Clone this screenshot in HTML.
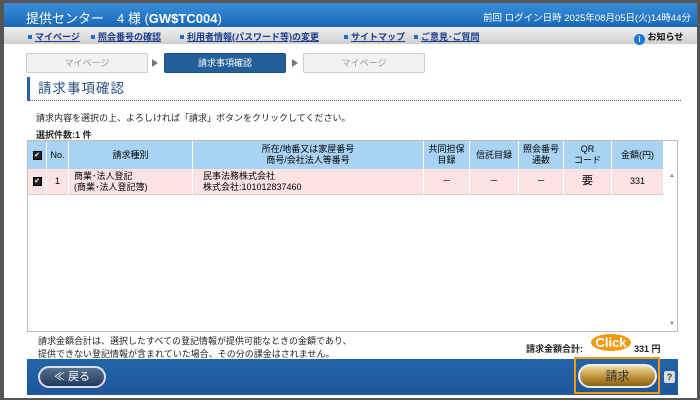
<!DOCTYPE html>
<html><head><meta charset="utf-8"><style>
*{margin:0;padding:0;box-sizing:border-box}
body{width:700px;height:400px;overflow:hidden;background:#555;font-family:"Liberation Sans","Noto Sans CJK JP",sans-serif;position:relative}
.frame{position:absolute;left:4px;top:3px;width:693px;height:395px;background:#fff;overflow:hidden}
.hdr{position:absolute;left:0;top:0;width:100%;height:24px;background:linear-gradient(#3a8fd8,#1a68b8);color:#fff}
.hdr .t{position:absolute;left:22px;top:5px;font-size:13px}
.hdr .r{position:absolute;right:6px;top:7px;font-size:9.5px}
.nav{position:absolute;left:0;top:24px;width:100%;height:17px;background:linear-gradient(#f0f0f0,#cfcfcf);font-size:9px;font-weight:bold}
.nav span{position:absolute;top:3px;color:#1a3c8c;text-decoration:underline}
.nav i{display:inline-block;width:4px;height:4px;background:#1e6fc8;margin-right:3px;vertical-align:1px}
.step{position:absolute;top:50px;height:20px;border:1px solid #ccc;background:#f2f2f2;color:#999;font-size:9px;text-align:center;line-height:18px;border-radius:2px}
.arr{position:absolute;top:56px;width:0;height:0;border-left:6px solid #777;border-top:4px solid transparent;border-bottom:4px solid transparent}
.h1{position:absolute;left:23px;top:74px;height:24px;border-left:3px solid #2862a8;padding-left:8px;font-size:13.5px;color:#2a4f7a;letter-spacing:1px;line-height:24px}
.dot{position:absolute;left:23px;top:97px;width:654px;border-top:1px dotted #557}
.txt{position:absolute;font-size:9px;color:#222}
.tbl{position:absolute;left:23px;top:137px;width:651px;height:192px;border:1px solid #bbb}
.c{position:absolute;font-size:9px;text-align:center;display:flex;align-items:center;justify-content:center;line-height:11px}
.hd{top:0;height:28px;background:#a9d3f2;border-right:1px solid #fff}
.rw{top:28px;height:26px;background:#fce3e3;border-right:1px solid #fff;border-bottom:1px solid #dcc}
.cb{width:9px;height:9px;background:#222;border:1px solid #000;color:#fff;font-size:7px;line-height:7px;text-align:center}
.foot{position:absolute;left:23px;top:356px;width:651px;height:36px;background:linear-gradient(#2364a8,#1d5799)}
</style></head><body>
<div class="frame">
<div class="hdr"><div class="t">提供センター　4 様 (<b>GW$TC004</b>)</div><div class="r">前回 ログイン日時 2025年08月05日(火)14時44分</div></div>
<div class="nav">
<span style="left:24px"><i></i>マイページ</span>
<span style="left:87px"><i></i>照会番号の確認</span>
<span style="left:176px"><i></i>利用者情報(パスワード等)の変更</span>
<span style="left:340px"><i></i>サイトマップ</span>
<span style="left:410px"><i></i>ご意見･ご質問</span>
<span style="left:630px;color:#111;text-decoration:none"><b style="display:inline-block;width:11px;height:11px;border-radius:50%;background:#1e78d0;color:#fff;font-size:8px;text-align:center;line-height:11px;vertical-align:-2px">i</b> お知らせ</span>
</div>
<div class="step" style="left:22px;width:122px">マイページ</div>
<div class="arr" style="left:148px"></div>
<div class="step" style="left:160px;width:122px;background:#235f98;color:#fff;border-color:#1d4f80">請求事項確認</div>
<div class="arr" style="left:288px"></div>
<div class="step" style="left:299px;width:122px">マイページ</div>
<div class="h1">請求事項確認</div>
<div class="dot"></div>
<div class="txt" style="left:32px;top:108px">請求内容を選択の上、よろしければ「請求」ボタンをクリックしてください。</div>
<div class="txt" style="left:32px;top:125px;font-weight:bold">選択件数:1 件</div>
<div class="tbl">
<div class="c hd" style="left:0;width:19px"><div class="cb">✔</div></div>
<div class="c hd" style="left:19px;width:22px">No.</div>
<div class="c hd" style="left:41px;width:124px">請求種別</div>
<div class="c hd" style="left:165px;width:231px">所在/地番又は家屋番号<br>商号/会社法人等番号</div>
<div class="c hd" style="left:396px;width:46px">共同担保<br>目録</div>
<div class="c hd" style="left:442px;width:49px">信託目録</div>
<div class="c hd" style="left:491px;width:45px">照会番号<br>通数</div>
<div class="c hd" style="left:536px;width:48px">QR<br>コード</div>
<div class="c hd" style="left:584px;width:52px">金額(円)</div>
<div class="c hd" style="left:636px;width:13px;border:none;background:#fff"></div>
<div class="c rw" style="left:0;width:19px"><div class="cb">✔</div></div>
<div class="c rw" style="left:19px;width:22px">1</div>
<div class="c rw" style="left:41px;width:124px;justify-content:flex-start;padding-left:5px;text-align:left">商業･法人登記<br>(商業･法人登記簿)</div>
<div class="c rw" style="left:165px;width:231px;justify-content:flex-start;padding-left:10px;text-align:left">民事法務株式会社<br>株式会社:101012837460</div>
<div class="c rw" style="left:396px;width:46px">－</div>
<div class="c rw" style="left:442px;width:49px">－</div>
<div class="c rw" style="left:491px;width:45px">－</div>
<div class="c rw" style="left:536px;width:48px;font-size:11px">要</div>
<div class="c rw" style="left:584px;width:52px">331</div>
<div style="position:absolute;left:641px;top:32px;font-size:6px;color:#888">▲</div>
<div style="position:absolute;left:641px;top:180px;font-size:6px;color:#888">▼</div>
</div>
<div class="txt" style="left:34px;top:332px;line-height:13px">請求金額合計は、選択したすべての登記情報が提供可能なときの金額であり、<br>提供できない登記情報が含まれていた場合、その分の課金はされません。</div>
<div class="txt" style="left:522px;top:339px;font-weight:bold">請求金額合計:</div>
<div style="position:absolute;left:587px;top:331px;width:40px;height:17px;border-radius:50%;background:#f39a12;color:#fff;font-size:13px;font-weight:bold;text-align:center;line-height:17px">Click</div>
<div class="txt" style="left:630px;top:339px;font-weight:bold">331 円</div>
<div class="foot">
<div style="position:absolute;left:11px;top:7px;width:68px;height:22px;border-radius:11px;border:2px solid #dde;background:linear-gradient(#56708f,#223b5e);color:#fff;font-size:11px;text-align:center;line-height:18px">≪ 戻る</div>
<div style="position:absolute;left:547px;top:-2px;width:86px;height:37px;border:2px solid #f39a12"></div>
<div style="position:absolute;left:551px;top:5px;width:79px;height:24px;border-radius:12px;border:2px solid #eee;background:linear-gradient(#f0dca0,#b88a30 60%,#8a6218);color:#333;font-size:12px;text-align:center;line-height:20px">請求</div>
<div style="position:absolute;left:637px;top:12px;width:11px;height:12px;border-radius:2px;background:#ddd;color:#334;font-size:9px;text-align:center;line-height:12px;font-weight:bold">?</div>
</div>
</div>
</body></html>
